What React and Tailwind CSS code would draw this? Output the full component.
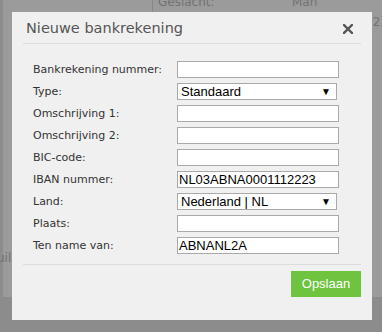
import React from 'react';

const rows = [
  { label: 'Bankrekening nummer:', type: 'input', value: '' },
  { label: 'Type:', type: 'select', value: 'Standaard' },
  { label: 'Omschrijving 1:', type: 'input', value: '' },
  { label: 'Omschrijving 2:', type: 'input', value: '' },
  { label: 'BIC-code:', type: 'input', value: '' },
  { label: 'IBAN nummer:', type: 'input', value: 'NL03ABNA0001112223' },
  { label: 'Land:', type: 'select', value: 'Nederland | NL' },
  { label: 'Plaats:', type: 'input', value: '' },
  { label: 'Ten name van:', type: 'input', value: 'ABNANL2A' },
];

const Field = ({ row }) => {
  if (row.type === 'select') {
    return (
      <div className="w-[160px] h-[17px] bg-white border border-[#a9a9a9] flex items-center justify-between pl-[3px] pr-[5px] font-['Liberation_Sans',Arial,sans-serif] text-[13px] text-black leading-none">
        <span>{row.value}</span>
        <span className="text-[10px]">▼</span>
      </div>
    );
  }
  return (
    <div className="w-[162px] h-[17px] bg-white border border-[#a9a9a9] flex items-center pl-[1px] font-['Liberation_Sans',Arial,sans-serif] text-[13px] text-black leading-none">
      {row.value}
    </div>
  );
};

const App = () => {
  return (
    <div className="relative w-[382px] h-[332px] overflow-hidden bg-[#8c8c8c] font-['DejaVu_Sans',Verdana,sans-serif]">
      {/* page under the overlay */}
      <div className="ml-[3px] h-[297px] bg-[#9b9b9b] text-[#727272] text-[12px]">
        <div className="flex h-[12px]">
          <div className="w-[149px]" />
          <div className="border-l border-[#888] pl-[5px] -mt-[7px] w-[140px]">Geslacht:</div>
          <div className="-mt-[7px]">Man</div>
        </div>
        <div className="flex justify-end pt-[1px] -mr-[3px]">
          <span>2)</span>
        </div>
        <div className="pt-[218px] -ml-[6px]">uil.</div>
      </div>

      {/* dialog */}
      <div className="absolute left-[12px] top-[12px] w-[360px] h-[308px] bg-[#f0f0f0] px-[11px]">
        <div className="h-[32px] flex items-center justify-between border-b border-[#dcdcdc] pl-[3px] pr-[8px]">
          <h1 className="text-[14.5px] text-[#555] pt-[2px]">Nieuwe bankrekening</h1>
          <svg width="10" height="10" viewBox="0 0 10 10" className="mt-[3px]">
            <path d="M1 1 L9 9 M9 1 L1 9" stroke="#555" strokeWidth="2.4" strokeLinecap="square" />
          </svg>
        </div>

        <div className="pt-[17px] pl-[10px] flex flex-col gap-[5px] pb-[10px] border-b border-[#dcdcdc]">
          {rows.map(row => (
            <div key={row.label} className="flex items-center h-[17px]">
              <label className="w-[144px] text-[11px] text-[#333] pt-[1px]">{row.label}</label>
              <Field row={row} />
            </div>
          ))}
        </div>

        <div className="flex justify-end pt-[6px]">
          <button className="w-[70px] h-[26px] bg-[#6ec33f] text-white text-[13px] font-['Liberation_Sans',Arial,sans-serif]">
            Opslaan
          </button>
        </div>
      </div>
    </div>
  );
};

export default App;
